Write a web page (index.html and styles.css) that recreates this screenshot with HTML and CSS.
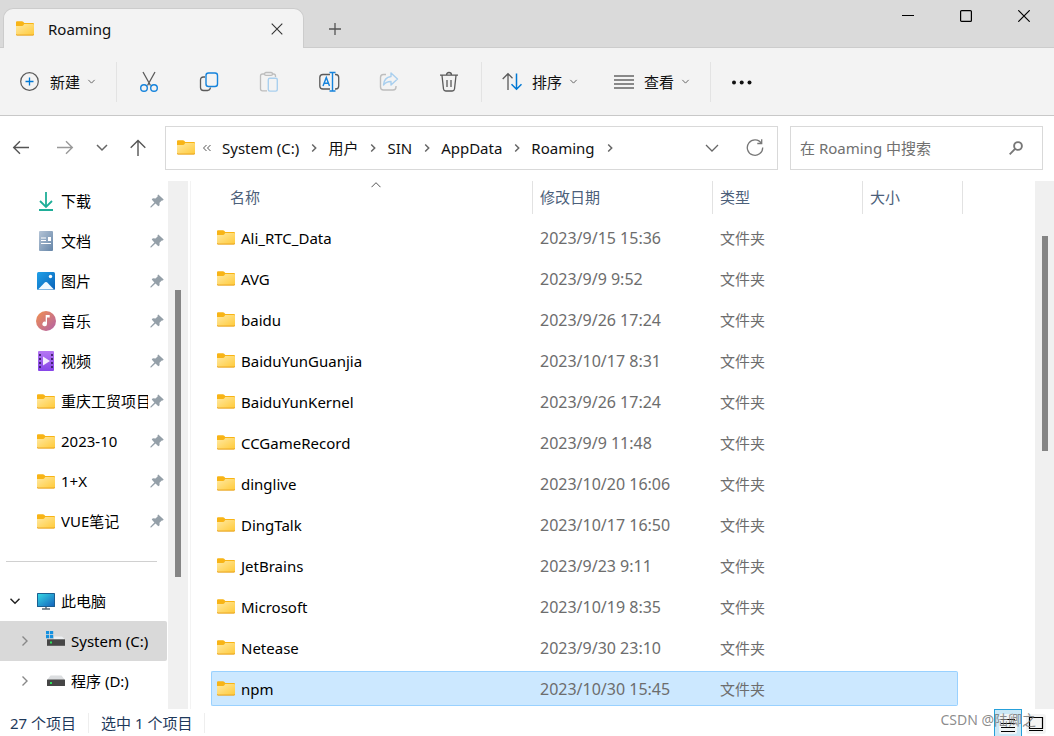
FILE: index.html
```html
<!DOCTYPE html>
<html lang="zh-CN">
<head>
<meta charset="utf-8">
<meta name="viewport" content="width=device-width, initial-scale=1">
<title>Roaming</title>
<link rel="stylesheet" href="styles.css">
</head>
<body>
<svg class="defs" aria-hidden="true">
  <defs>
    <linearGradient id="gf" x1="0" y1="0" x2="1" y2="1"><stop offset="0" stop-color="#ffe9a2"/><stop offset="1" stop-color="#ffca39"/></linearGradient>
    <linearGradient id="gd" x1="0" y1="0" x2="1" y2="1"><stop offset="0" stop-color="#b4c4d6"/><stop offset="1" stop-color="#6585a8"/></linearGradient>
    <linearGradient id="gp" x1="0" y1="0" x2="1" y2="1"><stop offset="0" stop-color="#1fa0e8"/><stop offset="1" stop-color="#0a62b8"/></linearGradient>
    <linearGradient id="gm" x1="0" y1="0" x2="1" y2="1"><stop offset="0" stop-color="#f2914f"/><stop offset="1" stop-color="#b160a8"/></linearGradient>
    <linearGradient id="gv" x1="0" y1="0" x2="0" y2="1"><stop offset="0" stop-color="#b577f2"/><stop offset="1" stop-color="#8644e8"/></linearGradient>
    <linearGradient id="gc" x1="0" y1="0" x2="1" y2="1"><stop offset="0" stop-color="#35d6e4"/><stop offset="1" stop-color="#1464bd"/></linearGradient>
    <symbol id="folder" viewBox="0 0 18 15"><path d="M0 1.200Q0 .2 1 .2h5q.7 0 1.200.5L8.300 2H17q1 0 1 1v3H0z" fill="#f8b416"/><path d="M0 5h6.200q.6 0 1-.4L8.200 3H17q1 0 1 1v9.200q0 1-1 1H1q-1 0-1-1z" fill="url(#gf)"/><path d="M0 13.200q.1.900 1 .9h16q.9 0 1-.9" fill="none" stroke="#e8a21c" stroke-width="1"/></symbol>
    <symbol id="pin" viewBox="0 0 14 14"><path d="M8.300.4 13.700 5.400 12.800 6.500 11.800 6.400 9.500 8.700 9.600 11.200 8.300 12.300 5.500 9.600 1.200 13.500.4 13.500.5 12.500 4.400 8.400 1.700 5.500 2.900 4.300 5.500 4.500 7.800 2.200 7.500 1.200z" fill="#949fa8"/></symbol>
    <symbol id="down" viewBox="0 0 10 10"><path d="m1.500 3.200 3.500 3.600 3.500-3.600" fill="none" stroke="currentColor" stroke-width="1.100"/></symbol>
    <symbol id="right" viewBox="0 0 10 10"><path d="m3.200 1.500 3.500 3.500-3.500 3.500" fill="none" stroke="currentColor" stroke-width="1.500"/></symbol>
    <symbol id="drive" viewBox="0 0 18 12"><path d="M3.500.6h11L18 5H0z" fill="#dcdee0"/><rect y="4.500" width="18" height="6.500" rx=".6" fill="#464646"/><rect x="3" y="7" width="2" height="2" fill="#2fe05c"/></symbol>
  </defs>
</svg>
<div class="window">
  <header class="titlebar">
    <div class="tab">
      <svg class="i-folder"><use href="#folder"/></svg>
      <span class="tab-title">Roaming</span>
      <button class="tab-close" aria-label="关闭标签页"><svg width="12" height="12" viewBox="0 0 12 12"><path d="m.7.7 10.600 10.600M11.300.7.7 11.300" stroke="#333" stroke-width="1.100"/></svg></button>
    </div>
    <button class="tab-new" aria-label="新标签页"><svg width="12" height="12" viewBox="0 0 12 12"><path d="M6 0v12M0 6h12" stroke="#555" stroke-width="1.300"/></svg></button>
    <div class="caption">
      <button aria-label="最小化"><svg width="12" height="12" viewBox="0 0 12 12"><path d="M0 5.500h12" stroke="#000"/></svg></button>
      <button aria-label="最大化"><svg width="12" height="12" viewBox="0 0 12 12"><rect x=".6" y=".6" width="10.800" height="10.800" rx="1" fill="none" stroke="#000" stroke-width="1.200"/></svg></button>
      <button aria-label="关闭"><svg width="12" height="12" viewBox="0 0 12 12"><path d="m.3.3 11.400 11.400M11.700.3.3 11.700" stroke="#000" stroke-width="1.200"/></svg></button>
    </div>
  </header>

  <div class="toolbar" role="toolbar">
    <button class="tool"><svg width="20" height="20" viewBox="0 0 20 20" fill="none"><circle cx="9.500" cy="9.500" r="8.800" stroke="#5a5a5a" stroke-width="1.200"/><path d="M9.500 5.500v8M5.500 9.500h8" stroke="#0078d4" stroke-width="1.300"/></svg><span>新建</span><svg class="i-drop"><use href="#down"/></svg></button>
    <span class="sep"></span>
    <button class="tool-icon" aria-label="剪切"><svg width="22" height="22" viewBox="0 0 22 22" fill="none"><path d="m5 1 7.500 13.500M17 1 9.500 14.500" stroke="#5a5a5a" stroke-width="1.300"/><circle cx="6" cy="17" r="3.300" stroke="#1583dc" stroke-width="1.400"/><circle cx="16" cy="17" r="3.300" stroke="#1583dc" stroke-width="1.400"/></svg></button>
    <button class="tool-icon" aria-label="复制"><svg width="22" height="22" viewBox="0 0 22 22" fill="none"><path d="M7 6H5.500Q2.500 6 2.500 9v7.500q0 3 3 3h4q2.500 0 3-3" stroke="#5a5a5a" stroke-width="1.300"/><rect x="8" y="2" width="11.500" height="13.500" rx="2.500" stroke="#1583dc" stroke-width="1.400"/></svg></button>
    <button class="tool-icon" aria-label="粘贴" disabled><svg width="22" height="22" viewBox="0 0 22 22" fill="none"><path d="M7 3H4.500q-2 0-2 2v13q0 1.800 2 1.800H9M14.500 3h1q2 0 2 2v1" stroke="#bdbdbd" stroke-width="1.300"/><rect x="6.500" y="1.500" width="8" height="2.800" rx="1.400" stroke="#bdbdbd" stroke-width="1.300"/><rect x="10.300" y="7.300" width="9" height="12.800" rx="1.500" stroke="#a9cfee" stroke-width="1.400"/></svg></button>
    <button class="tool-icon" aria-label="重命名"><svg width="22" height="22" viewBox="0 0 22 22" fill="none"><path d="M12 3.500H5Q1.800 3.500 1.800 6.500v8.500q0 3 3.200 3h7M17 3.500h.7q3 0 3 3v8.500q0 3-3 3H17" stroke="#5a5a5a" stroke-width="1.300"/><path d="M14.500 1.500v18.500M11.500 1.500h6M11.500 20h6M5 15 8.300 6.500 11.500 15M6.100 12.200h4.300" stroke="#1583dc" stroke-width="1.400"/></svg></button>
    <button class="tool-icon" aria-label="共享" disabled><svg width="22" height="22" viewBox="0 0 22 22" fill="none"><path d="M8 3.500H5.500q-3 0-3 3V16q0 3 3 3H15q3 0 3-3v-1" stroke="#bdbdbd" stroke-width="1.400"/><path d="m13 2 6.500 6-6.500 6v-3.500Q8.500 10.300 5.500 14 6 6.500 13 5.500z" stroke="#a9cfee" stroke-width="1.400" stroke-linejoin="round"/></svg></button>
    <button class="tool-icon" aria-label="删除"><svg width="22" height="22" viewBox="0 0 22 22" fill="none" stroke="#5a5a5a" stroke-width="1.300"><path d="M2 4.200h18M8.500 4q0-2.500 2.500-2.500T13.500 4M4 4.500l1.500 13.500q.3 2 2.300 2h6.400q2 0 2.300-2L18 4.500M9 9v7M13 9v7"/></svg></button>
    <span class="sep"></span>
    <button class="tool"><svg width="20" height="20" viewBox="0 0 20 20" fill="none" stroke-width="1.300"><path d="M6 18V2M.7 7 6 1.700 10.500 6.200" stroke="#5a5a5a"/><path d="M14.500 1.500V17M9.500 12.300l5 5 5-5" stroke="#0078d4" stroke-width="1.500"/></svg><span>排序</span><svg class="i-drop"><use href="#down"/></svg></button>
    <button class="tool"><svg width="20" height="20" viewBox="0 0 20 20"><path d="M0 4h20M0 8h20M0 12h20M0 16h20" stroke="#666" stroke-width="1.300"/></svg><span>查看</span><svg class="i-drop"><use href="#down"/></svg></button>
    <span class="sep"></span>
    <button class="tool-icon" aria-label="更多"><svg width="22" height="22" viewBox="0 0 22 22" fill="#111"><circle cx="2" cy="11.500" r="2"/><circle cx="9.700" cy="11.500" r="2"/><circle cx="17.500" cy="11.500" r="2"/></svg></button>
  </div>

  <nav class="navbar">
    <div class="history">
      <button aria-label="后退"><svg width="18" height="18" viewBox="0 0 18 18"><path d="M17 8.500H1.700M8 2.200 1.700 8.500l6.300 6.300" fill="none" stroke="#555" stroke-width="1.400"/></svg></button>
      <button class="wide" aria-label="前进"><svg width="18" height="18" viewBox="0 0 18 18"><path d="M1 8.500h15.300M10 2.200l6.300 6.300-6.300 6.300" fill="none" stroke="#999" stroke-width="1.400"/></svg></button>
      <button class="narrow" aria-label="最近位置"><svg width="12" height="12" viewBox="0 0 12 12"><path d="m1 3 5 5 5-5" fill="none" stroke="#666" stroke-width="1.500"/></svg></button>
      <button aria-label="向上"><svg width="18" height="18" viewBox="0 0 18 18"><path d="M9 17V1.700M1.700 8.700 9 1.500 16.300 8.700" fill="none" stroke="#555" stroke-width="1.400"/></svg></button>
    </div>
    <div class="address">
      <svg class="i-folder"><use href="#folder"/></svg>
      <svg class="i-more" viewBox="0 0 10 10"><path d="M4.500 2 1.500 5l3 3M8.500 2l-3 3 3 3" fill="none" stroke="#555"/></svg>
      <a href="#">System (C:)</a><svg class="i-crumb"><use href="#right"/></svg>
      <a href="#">用户</a><svg class="i-crumb"><use href="#right"/></svg>
      <a href="#">SIN</a><svg class="i-crumb"><use href="#right"/></svg>
      <a href="#">AppData</a><svg class="i-crumb"><use href="#right"/></svg>
      <a href="#">Roaming</a><svg class="i-crumb"><use href="#right"/></svg>
      <span class="address-tools">
        <button aria-label="历史记录"><svg width="14" height="14" viewBox="0 0 14 14"><path d="m1 4 6 6 6-6" fill="none" stroke="#666" stroke-width="1.300"/></svg></button>
        <button aria-label="刷新"><svg width="18" height="18" viewBox="0 0 18 18" fill="none" stroke="#777" stroke-width="1.300"><path d="M15.500 4.500A7.700 7.700 0 1 0 16.700 8.500M15.700.3V4.500h-4.400"/></svg></button>
      </span>
    </div>
    <label class="search">
      <input type="text" placeholder="在 Roaming 中搜索" aria-label="在 Roaming 中搜索">
      <svg width="14" height="14" viewBox="0 0 14 14" fill="none" stroke="#777" stroke-width="1.900"><circle cx="9" cy="5" r="3.900"/><path d="M6.300 7.700.7 13.300"/></svg>
    </label>
  </nav>

  <main class="content">
    <aside class="sidebar">
      <a class="place" href="#"><svg class="i-place" viewBox="0 0 20 20"><path d="M10 1v15M4 10l6 6 6-6M3 19h14" fill="none" stroke="#1fae98" stroke-width="1.800"/></svg><span>下载</span><svg class="i-pin"><use href="#pin"/></svg></a>
      <a class="place" href="#"><svg class="i-place" viewBox="0 0 20 20"><rect x="3" width="14" height="20" rx="1" fill="url(#gd)"/><path d="M5 7h5M5 9.500h5M5 12.500h10" stroke="#fff" stroke-width="1.200"/><rect x="12" y="6" width="3" height="4" fill="#fff"/></svg><span>文档</span><svg class="i-pin"><use href="#pin"/></svg></a>
      <a class="place" href="#"><svg class="i-place" viewBox="0 0 20 20"><rect x="1" y="1" width="18" height="18" rx="1.500" fill="url(#gp)"/><path d="m2 18.500 7-7.200q1-.8 2 0l7 7.200z" fill="#f1f9ff"/><circle cx="14.500" cy="5.500" r="1.700" fill="#fff"/></svg><span>图片</span><svg class="i-pin"><use href="#pin"/></svg></a>
      <a class="place" href="#"><svg class="i-place" viewBox="0 0 20 20"><circle cx="10" cy="10" r="10" fill="url(#gm)"/><path d="M9.700 4h4v2.500H11V13a2.300 2.300 0 1 1-1.300-2.200z" fill="#fff"/></svg><span>音乐</span><svg class="i-pin"><use href="#pin"/></svg></a>
      <a class="place" href="#"><svg class="i-place" viewBox="0 0 20 20"><rect x="2" width="16" height="20" rx="1" fill="url(#gv)"/><path d="M4 3v16M16 3v16" stroke="#3c2068" stroke-width="1.800" stroke-dasharray="2 2"/><path d="m7 5.500 7 4.500-7 4.500z" fill="#f4ebff"/></svg><span>视频</span><svg class="i-pin"><use href="#pin"/></svg></a>
      <a class="place" href="#"><svg class="i-folder"><use href="#folder"/></svg><span>重庆工贸项目</span><svg class="i-pin"><use href="#pin"/></svg></a>
      <a class="place" href="#"><svg class="i-folder"><use href="#folder"/></svg><span>2023-10</span><svg class="i-pin"><use href="#pin"/></svg></a>
      <a class="place" href="#"><svg class="i-folder"><use href="#folder"/></svg><span>1+X</span><svg class="i-pin"><use href="#pin"/></svg></a>
      <a class="place" href="#"><svg class="i-folder"><use href="#folder"/></svg><span>VUE笔记</span><svg class="i-pin"><use href="#pin"/></svg></a>
      <hr>
      <a class="place computer" href="#"><svg class="i-tree" viewBox="0 0 10 10"><path d="m.5 2.800 4.500 4.400 4.500-4.400" fill="none" stroke="#222" stroke-width="1.500"/></svg><svg class="i-place" viewBox="0 0 20 20"><rect x="1" y="2" width="18" height="14" rx=".6" fill="#1b5f91"/><rect x="2" y="3" width="16" height="12" fill="url(#gc)"/><path d="M10 16v1.500M6 18h8" stroke="#5b6a74" stroke-width="1.500"/></svg><span>此电脑</span></a>
      <a class="place disk current" href="#"><svg class="i-tree" viewBox="0 0 10 10"><path d="m2.500.5 4.500 4.500-4.500 4.500" fill="none" stroke="#888" stroke-width="1.400"/></svg><svg class="i-place" viewBox="0 0 20 20"><g fill="#1490df"><path d="M0 0h3.200v3.200H0zM4 0h3.200v3.200H4zM0 4h3.200v3.200H0zM4 4h3.200v3.200H4z"/></g><path d="M8 5.500h8l3 3H8z" fill="#eceef0"/><rect x="1" y="8.300" width="18" height="6.500" fill="#464646"/><rect x="4" y="10.500" width="2" height="2" fill="#2fe05c"/></svg><span>System (C:)</span></a>
      <a class="place disk" href="#"><svg class="i-tree" viewBox="0 0 10 10"><path d="m2.500.5 4.500 4.500-4.500 4.500" fill="none" stroke="#888" stroke-width="1.400"/></svg><svg class="i-drive"><use href="#drive"/></svg><span>程序 (D:)</span></a>
    </aside>
    <div class="scroll scroll-left"><i></i></div>
    <section class="files">
      <table>
        <colgroup><col><col class="c-date"><col class="c-type"><col class="c-size"><col class="c-end"></colgroup>
        <thead><tr>
          <th class="name-head"><button>名称</button><svg class="sort-mark" viewBox="0 0 10 6"><path d="m.5 5.200 4.500-4.500 4.500 4.500" fill="none" stroke="#555"/></svg></th>
          <th><button>修改日期</button></th><th><button>类型</button></th><th colspan="2"><button>大小</button></th>
        </tr></thead>
        <tbody>
          <tr><td><svg class="i-folder"><use href="#folder"/></svg>Ali_RTC_Data</td><td class="date">2023/9/15 15:36</td><td>文件夹</td><td></td><td></td></tr>
          <tr><td><svg class="i-folder"><use href="#folder"/></svg>AVG</td><td class="date">2023/9/9 9:52</td><td>文件夹</td><td></td><td></td></tr>
          <tr><td><svg class="i-folder"><use href="#folder"/></svg>baidu</td><td class="date">2023/9/26 17:24</td><td>文件夹</td><td></td><td></td></tr>
          <tr><td><svg class="i-folder"><use href="#folder"/></svg>BaiduYunGuanjia</td><td class="date">2023/10/17 8:31</td><td>文件夹</td><td></td><td></td></tr>
          <tr><td><svg class="i-folder"><use href="#folder"/></svg>BaiduYunKernel</td><td class="date">2023/9/26 17:24</td><td>文件夹</td><td></td><td></td></tr>
          <tr><td><svg class="i-folder"><use href="#folder"/></svg>CCGameRecord</td><td class="date">2023/9/9 11:48</td><td>文件夹</td><td></td><td></td></tr>
          <tr><td><svg class="i-folder"><use href="#folder"/></svg>dinglive</td><td class="date">2023/10/20 16:06</td><td>文件夹</td><td></td><td></td></tr>
          <tr><td><svg class="i-folder"><use href="#folder"/></svg>DingTalk</td><td class="date">2023/10/17 16:50</td><td>文件夹</td><td></td><td></td></tr>
          <tr><td><svg class="i-folder"><use href="#folder"/></svg>JetBrains</td><td class="date">2023/9/23 9:11</td><td>文件夹</td><td></td><td></td></tr>
          <tr><td><svg class="i-folder"><use href="#folder"/></svg>Microsoft</td><td class="date">2023/10/19 8:35</td><td>文件夹</td><td></td><td></td></tr>
          <tr><td><svg class="i-folder"><use href="#folder"/></svg>Netease</td><td class="date">2023/9/30 23:10</td><td>文件夹</td><td></td><td></td></tr>
          <tr class="selected"><td><svg class="i-folder"><use href="#folder"/></svg>npm</td><td class="date">2023/10/30 15:45</td><td>文件夹</td><td></td><td></td></tr>
        </tbody>
      </table>
    </section>
    <div class="scroll scroll-right"><i></i></div>
  </main>

  <footer class="status">
    <span>27 个项目</span><span>选中 1 个项目</span>
    <div class="views">
      <button class="active" aria-label="详细信息"><svg width="18" height="20" viewBox="0 0 18 20"><rect width="18" height="20" rx="2" fill="#f0f4f7"/><path d="M2 5.500h14M2 9.500h14M2 13.500h14M2 17.500h14" stroke="#000"/></svg></button>
      <button aria-label="大图标"><svg width="20" height="20" viewBox="0 0 20 20"><rect width="20" height="20" rx="3" fill="#f3f3f3"/><path d="M3.500 3.500h13v11h-13zM3 16.500h14" fill="none" stroke="#000" stroke-width="1.200"/></svg></button>
    </div>
    <span class="watermark">CSDN @陆卿之</span>
  </footer>
</div>
</body>
</html>
```
FILE: styles.css
```css
* { box-sizing: border-box; }
body {
  margin: 0;
  background: #fff;
  color: #111;
  font: 15px/20px "Noto Sans", "Noto Sans CJK SC", sans-serif;
}
button {
  display: flex;
  align-items: center;
  justify-content: center;
  padding: 0;
  border: 0;
  background: none;
  color: inherit;
  font: inherit;
}
a { color: inherit; text-decoration: none; }
svg { display: block; flex: none; }
.defs { position: absolute; width: 0; height: 0; }
.window { display: flex; flex-direction: column; height: 100vh; overflow: hidden; }
.i-folder { width: 18px; height: 15px; }

.titlebar {
  display: flex;
  align-items: flex-end;
  height: 48px;
  padding-left: 3px;
  background: #dadada;
  box-shadow: inset 0 -1px #ccc;
  flex: none;
}
.tab {
  display: flex;
  align-items: center;
  width: 301px;
  height: 40px;
  padding: 0 20px 0 12px;
  border: 1px solid #ccc;
  border-bottom: 0;
  border-radius: 10px 10px 0 0;
  background: #f3f3f3;
}
.tab-title { margin-left: 14px; }
.tab-close { margin-left: auto; }
.tab-new { width: 62px; height: 38px; }
.caption { display: flex; align-self: flex-start; margin-left: auto; padding-right: 1px; }
.caption button { width: 58px; height: 32px; }

.toolbar {
  display: flex;
  align-items: center;
  height: 68px;
  padding-left: 2px;
  border-bottom: 1px solid #c8c8c8;
  background: #f3f3f3;
  flex: none;
}
.tool { height: 40px; padding: 0 18px; }
.tool span { margin: 0 7px 0 10px; }
.i-drop { width: 9px; height: 9px; color: #666; }
.tool-icon { width: 60px; height: 40px; }
.sep { width: 1px; height: 40px; margin: 0 2px; background: #e3e3e3; }

.navbar { display: flex; height: 65px; padding: 10px 11px 11px 0; flex: none; }
.history { display: flex; width: 165px; }
.history button { width: 42px; }
.history .wide { width: 45px; }
.history .narrow { width: 30px; }
.address {
  display: flex;
  align-items: center;
  flex: 1;
  margin-right: 12px;
  padding: 0 0 1px 11px;
  border: 1px solid #d9d9d9;
}
.i-more { width: 10px; height: 10px; margin: 0 10px 0 7px; }
.i-crumb { width: 10px; height: 10px; margin: 0 9px 0 10px; color: #666; }
.address-tools { display: flex; margin-left: auto; padding-right: 1px; }
.address-tools button { width: 43px; height: 40px; }
.search {
  display: flex;
  align-items: center;
  width: 253px;
  padding: 0 19px 0 9px;
  border: 1px solid #d9d9d9;
}
.search input {
  flex: 1;
  min-width: 0;
  padding: 0;
  border: 0;
  outline: 0;
  background: none;
  font: inherit;
}
.search input::placeholder { color: #707070; opacity: 1; }

.content { display: flex; flex: 1; min-height: 0; }
.sidebar { width: 168px; overflow: hidden; color: #000; }
.place {
  display: flex;
  align-items: center;
  height: 40px;
  margin-right: 1px;
  padding: 0 3px 0 36px;
}
.place span { flex: 1; min-width: 0; margin: 0 2px 0 5px; overflow: hidden; white-space: nowrap; }
.place .i-folder { margin: 0 1px; }
.i-place { width: 20px; height: 20px; }
.i-pin { width: 14px; height: 14px; }
.i-tree { width: 10px; height: 10px; }
.i-drive { width: 18px; height: 12px; margin: 0 1px; }
.computer { padding-left: 10px; }
.computer .i-tree { margin-right: 16px; }
.disk { padding-left: 20px; }
.disk .i-tree { margin-right: 16px; }
.current { border-radius: 0 2px 2px 0; background: #d9d9d9; }
.sidebar hr { height: 1px; margin: 20px 11px 19px 6px; border: 0; background: #d0d0d0; }

.scroll { display: grid; justify-content: center; background: #f0f0f0; flex: none; }
.scroll i { grid-row: 2; width: 6px; background: #858585; }
.scroll-left { width: 20px; grid-template-rows: 109fr 287fr 132fr; }
.scroll-right { width: 19px; grid-template-rows: 55fr 215fr 258fr; }

.files {
  flex: 1;
  min-width: 0;
  margin-left: 2px;
  padding: 0 72px 0 20px;
  border-left: 1px solid #f3f3f3;
  overflow: hidden;
}
table {
  width: 100%;
  margin-top: -6px;
  border-collapse: separate;
  border-spacing: 0 6px;
  table-layout: fixed;
}
.c-date { width: 180px; }
.c-type { width: 150px; }
.c-size { width: 95px; }
.c-end { width: 5px; }
th {
  height: 33px;
  padding: 0 0 2px 7px;
  border-right: 1px solid #e2e2e2;
  color: #4c607a;
  font-weight: 400;
}
.name-head { position: relative; padding-left: 19px; }
.sort-mark { position: absolute; top: 1px; left: 50%; width: 10px; height: 6px; }
td {
  height: 35px;
  padding: 0 0 0 7px;
  border: 0 solid #99d1ff;
  color: #6d6d6d;
  white-space: nowrap;
}
td:first-child { padding-left: 6px; color: #000; }
td .i-folder { display: inline-block; margin-right: 6px; vertical-align: -1px; }
td:last-child { padding: 0; }
.date { font-size: 16px; }
.selected td:not(:last-child) { border-width: 1px 0; background: #cce8ff; }
.selected td:first-child { padding-left: 5px; border-left-width: 1px; border-radius: 2px 0 0 2px; }
.selected td:nth-child(4) { border-right-width: 1px; border-radius: 0 2px 2px 0; }

.status {
  position: relative;
  display: flex;
  align-items: center;
  height: 27px;
  padding-left: 10px;
  color: #1e395b;
  flex: none;
}
.status > span:not(.watermark) { margin-right: 12px; padding-right: 12px; border-right: 1px solid #eee; }
.views { display: flex; align-self: stretch; margin-left: auto; padding-right: 4px; }
.views button { width: 28px; padding-top: 2px; }
.views .active { border: 1px solid #26a0da; border-bottom: 0; background: #cbe8f6; }
.watermark { position: absolute; right: 18px; top: 1px; color: #777777d9; font-size: 14px; }
```
